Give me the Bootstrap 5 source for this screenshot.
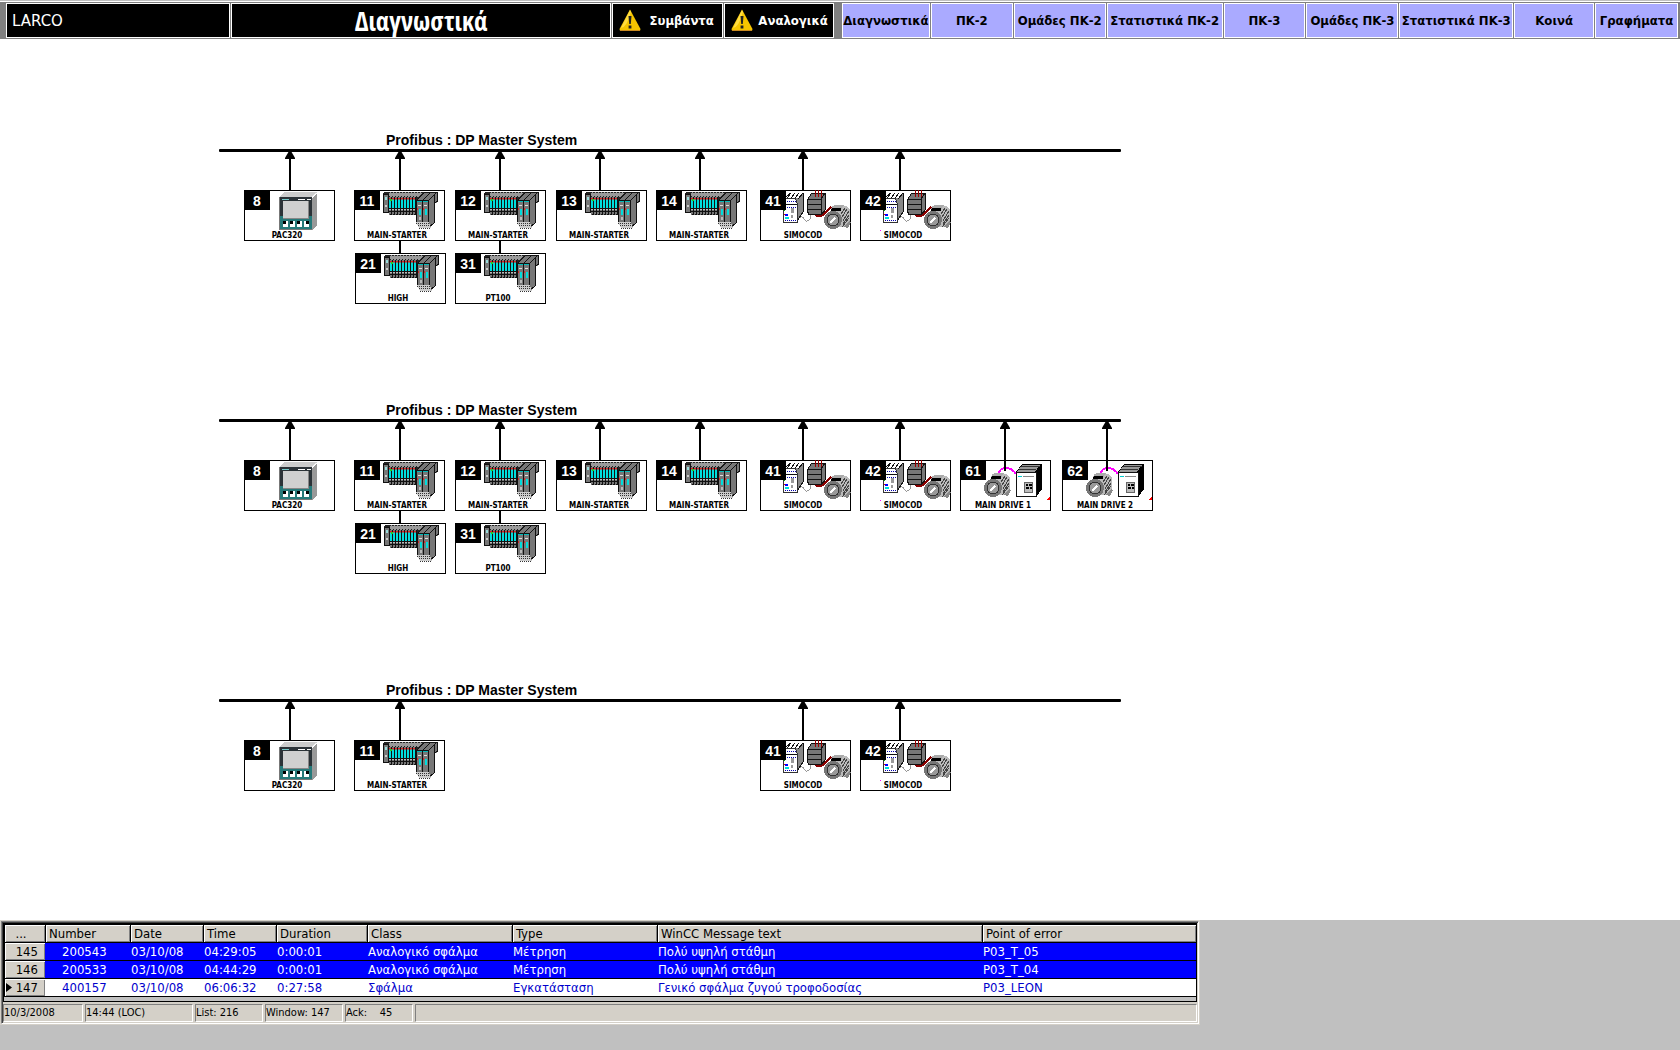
<!DOCTYPE html>
<html lang="el">
<head>
<meta charset="utf-8">
<meta name="viewport" content="width=device-width, initial-scale=1">
<title>LARCO - Διαγνωστικά</title>
<link href="https://cdn.jsdelivr.net/npm/bootstrap@5.3.0/dist/css/bootstrap.min.css" rel="stylesheet">
<style>
  body { background: #c0c0c0; color: #000; font-family: "DejaVu Sans", sans-serif; }

  /* top bar */
  .topbar { background: #808080; border-top: 1px solid #c0c0c0; box-shadow: inset 0 1px #fff; padding: 2px 2px 1px 6px; column-gap: 1px;
    grid-template-columns: 224fr 381fr 111fr 117fr 88fr 82fr 92fr 116fr 82fr 92fr 114fr 80fr 83fr; }
  .cellbox { height: 35px; border: 1px solid #fff; background: #000; color: #fff; padding: 0; min-width: 0; white-space: nowrap; }
  .plant { font-size: 15px; padding: 2px 0 0 5px; }
  .heading { font: 700 26px/34px "Liberation Sans Narrow", "Open Sans Condensed", "DejaVu Sans Condensed", sans-serif; }
  .alertbtn { font: 700 13px/33px "DejaVu Sans Condensed", sans-serif; }
  .alertbtn svg { width: 22px; height: 23px; margin-left: 6px; }
  .alertbtn.gapped { margin-right: 7px; }
  .menubtn { background: #aaf; color: #000; font: 700 13px/33px "DejaVu Sans Condensed", sans-serif; }
  .menubtn:hover { background: #bbf; }

  /* network diagram */
  .plan { background: #fff; padding: 92px 0 65px; overflow-x: auto; }
  .segment { position: relative; min-height: 174px; min-width: 1200px; }
  .seg2 { margin-top: 96px; }
  .seg3 { margin-top: 106px; }
  .segment h2 { font: 700 14px/18px "Liberation Sans", sans-serif; margin: 0 0 0 386px; }
  .busline { width: 902px; height: 3px; background: #000; margin-left: 219px; border-radius: 1px; }
  .wires { position: absolute; left: 0; top: 0; width: 1200px; height: 174px; pointer-events: none; }
  .station { position: absolute; top: 59px; width: 91px; height: 51px; border: 1px solid #000; background: #fff; padding: 0; }
  .station.low { top: 122px; }
  .station svg { position: absolute; left: -1px; top: -1px; width: 91px; height: 51px; shape-rendering: crispEdges; }
  .station b { position: absolute; left: 0; top: 0; width: 24px; height: 19px; background: #000; color: #fff; font: 700 14px/20px "Liberation Sans", sans-serif; text-align: center; box-shadow: 1px 0 #000; }
  .station span { position: absolute; left: 0; right: 5px; bottom: -1px; font: 700 8px/10px "DejaVu Sans Condensed", sans-serif; text-align: center; white-space: nowrap; }
  .c8 { left: 244px; } .c11 { left: 354px; } .c21 { left: 355px; } .c12 { left: 455px; }
  .c13 { left: 556px; } .c14 { left: 656px; } .c41 { left: 760px; } .c42 { left: 860px; }
  .c61 { left: 960px; } .c62 { left: 1062px; }

  /* alarm list */
  .alarms { width: 100%; max-width: 1200px; background: #d4d0c8; border: 1px solid #d4d0c8; font-family: "DejaVu Sans Condensed", sans-serif; }
  .sunk { border: 1px solid; border-color: #808080 #fff #fff #808080; }
  .sunk > div { border: solid #404040; border-width: 1px 0 0 1px; padding: 0 1px 1px 0; }
  .listframe { border: solid #000; border-width: 1px 1px 0; }
  .msgs { table-layout: fixed; width: 100%; border-collapse: separate; border-spacing: 0; font-size: 13px; line-height: 17px; }
  .msgs th, .msgs td { height: 18px; padding: 0 0 0 1px; border-bottom: 1px solid #000; white-space: nowrap; overflow: hidden; font-weight: 400; }
  .msgs thead th { height: 19px; background: #d4d0c8; border-top: 1px solid #000; border-left: 1px solid #000; box-shadow: inset 1px 1px #fff, inset -1px -1px #808080; padding: 1px 0 0 3px; line-height: 16px; }
  .msgs tbody th { background: #d4d0c8; border-left: 1px solid #000; box-shadow: inset 1px 1px #fff, inset -1px -1px #808080; padding-right: 7px; text-align: right; }
  .msgs .hot td { background: #00f; color: #fff; }
  .msgs .now td { background: #fff; color: #00c; }
  .msgs tbody td:nth-child(2) { padding-left: 17px; }
  .msgs tbody th svg { width: 6px; height: 9px; float: left; margin: 4px 0 0; }
  .listend { height: 5px; background: #c0c0c0; border-bottom: 1px solid #000; }
  .status { font-size: 11px; line-height: 16px; gap: 2px; padding: 2px 0 0; }
  .status li { height: 18px; border: 1px solid; border-color: #808080 #fff #fff #808080; white-space: pre; }
  .w80 { width: 80px; } .w108 { width: 108px; } .w68 { width: 68px; } .w78 { width: 78px; }
</style>
</head>
<body>
<svg class="d-none" xmlns="http://www.w3.org/2000/svg">
  <defs>
    <symbol id="warn" viewBox="0 0 22 23">
      <path d="M11 0.5 L21.5 20 Q21.5 22 20 22 H2 Q0.5 22 0.5 20 Z" fill="#f5c400"/>
      <path d="M11 1 L2 19 Q8 18 12 3Z" fill="#ffdc40"/>
      <path d="M1 21.5H21" stroke="#c98a20"/>
      <path d="M9.5 7h3l-.7 8h-1.6z" fill="#222"/><rect x="9.6" y="16.500" width="2.800" height="3" fill="#222"/>
    </symbol>
    <symbol id="arrow" viewBox="0 0 12 60" overflow="visible">
      <path d="M5 2h2l4 7v1H1v-1z"/><rect x="5" y="8" width="2" height="33"/>
    </symbol>
    <symbol id="pac" viewBox="0 0 91 51">
      <path d="M35 7l5-5h33l-5 5z" fill="#ccc"/><path d="M68 8l5-5v32l-5 5z" fill="#999"/><path d="M68 7l4-4" stroke="#eee"/>
      <rect x="35" y="7" width="33" height="32" fill="#2c3338"/><path d="M35 26h33v13H35z" fill="#267a7a"/>
      <path d="M35.500 7v32h32" stroke="#777" fill="none"/>
      <rect x="39" y="11" width="26" height="18" fill="#d0d0d0"/><path d="M39 28.500h26M64.500 11v18" stroke="#888"/>
      <path d="M38 9.500h7" stroke="#7cc"/><path d="M54 9.500h7M63 9.500h4" stroke="#fff"/>
      <path d="M39 31h5v6h-5zM46 31h5v6h-5zM53 31h5v6h-5zM60 31h5v6h-5z" fill="#fff"/>
      <path d="M39 31h3v3h-3zM46 31h3v3h-3zM53 31h3v3h-3zM62 31h3v3h-3z"/>
    </symbol>
    <symbol id="mod" viewBox="0 0 3 18" overflow="visible">
      <rect width="3" height="18" fill="#777"/><rect y="3" width="2" height="8" fill="#0dd"/><path d="M2 0h1v18H2z" fill="#111"/>
      <rect width="2" height="1" y="1" fill="#d22"/><path d="M0 11h3v1H0zM0 14h3v1H0zM1 17h2v1H1z" fill="#111"/><path d="M0 12h2v1H0z" fill="#bbb"/>
    </symbol>
    <symbol id="et" viewBox="0 0 91 51">
      <path d="M30 2h53v5l-12 4H29V4z" fill="#222"/>
      <path d="M33 7l4-4M36 7l4-4M39 7l4-4M42 7l4-4M45 7l4-4M48 7l4-4M51 7l4-4M54 7l4-4M57 7l4-4M60 7l4-4M63 7l4-4" stroke="#999" stroke-width="1.500"/>
      <path d="M29 4h5l1 18h-6z" fill="#777" stroke="#111"/><path d="M31 7h2v3h-2z" fill="#9dd"/><path d="M31 15h2v2h-2z" fill="#ccc"/>
      <use href="#mod" x="35" y="7" width="3" height="18"/><use href="#mod" x="38" y="7" width="3" height="18"/><use href="#mod" x="41" y="7" width="3" height="18"/><use href="#mod" x="44" y="7" width="3" height="18"/><use href="#mod" x="47" y="7" width="3" height="18"/><use href="#mod" x="50" y="7" width="3" height="18"/><use href="#mod" x="53" y="7" width="3" height="18"/><use href="#mod" x="56" y="7" width="3" height="18"/><use href="#mod" x="59" y="7" width="3" height="18"/>
      <path d="M36 9h2v2h-2z" fill="#2c2"/>
      <path d="M62 11l9-9h13v10l-3 1v20l-6 5h-2V11z" fill="#777"/>
      <path d="M62.500 10.500l8-8h13v9l-3 1v20l-6 5" fill="none" stroke="#111"/>
      <path d="M68 11l8-8M74 11l8-8" stroke="#111"/><path d="M80 4v8" stroke="#111"/>
      <path d="M62.500 10.500h6v22h-6zM68.500 10.500h6v22h-6z" fill="#777" stroke="#111"/>
      <path d="M63 11h5v1h-5zM69 11h5v1h-5z" fill="#0bb"/><path d="M64 15h3v1h-3zM70 15h3v1h-3z" fill="#ddd"/>
      <path d="M65 19h2v6h-2zM71 19h2v6h-2z" fill="#0dd"/><path d="M63 18h1v2h-1zM69 18h1v2h-1z" fill="#d22"/><path d="M65 27h2v3h-2z" fill="#bbb"/>
      <path d="M62 32h13l2 6H65z" fill="#ccc"/><path d="M62 33.500h13M64 35.500h12M65 38.500h12" stroke="#333" stroke-dasharray="1 1"/>
    </symbol>
    <symbol id="motor" viewBox="0 0 32 26" overflow="visible">
      <path d="M9 4l4-3h9l4 4v12l-5 5H10z" fill="#bbb"/>
      <path d="M17 9l4-6M18 12l5-8M19 16l6-10M19 19l6-9M18 22l7-9" stroke="#444"/>
      <path d="M20 22l5-6 2 1-3 6z" fill="#888"/>
      <path d="M8 1l3-1h9l-3 5H7z" fill="#aaa"/><path d="M8 3h9v3H7z"/>
      <circle cx="9" cy="15" r="9" fill="#777"/><circle cx="9" cy="15" r="6" fill="#999" stroke="#333"/>
      <path d="M6 18l5-5" stroke="#fff" stroke-width="2"/>
    </symbol>
    <symbol id="simo" viewBox="0 0 91 51">
      <path d="M24 9l6-6h13v19l-6 9z" fill="#888" stroke="#111"/>
      <path d="M25 8l5-5h13l-4 5z" fill="#fff"/><path d="M27 8l4-5M31 8l4-5M35 8l4-5M38 9l5-6" stroke="#111"/>
      <path d="M23.500 8.500h12l2 6v18h-14z" fill="#fff" stroke="#333"/>
      <path d="M25 11.500h11M25 17.500h12M25 30.500h11" stroke="#00a" stroke-dasharray="1 1"/><path d="M24 14.500h13" stroke="#111"/>
      <path d="M25 24h3v2h-3z" fill="#00f"/><path d="M25 27h4v2h-4z" fill="#0dd"/><path d="M31 18h3v5h-3zM31 25h2v3h-2z" fill="#999"/><path d="M24 20h1v1h-1z" fill="#0b0"/><path d="M24 24h1v1h-1z" fill="red"/>
      <path d="M40 28q2-3 4 1t6 0v-4" fill="none" stroke="#999"/>
      <path d="M55 25q5 3 9-1t7-7" fill="none" stroke="#800" stroke-width="2"/>
      <path d="M47.500 9.500l4-6h14v16l-4 5h-13l-1-4z" fill="#777" stroke="#111"/>
      <path d="M47 9h14l4-6M61 9v15M48 14.500h13M47 19.500h14" stroke="#111" fill="none"/>
      <path d="M55.500 0v7M58.500 0v7M61.500 0v7" stroke="#900"/>
      <use href="#motor" x="64" y="15" width="32" height="26"/>
    </symbol>
    <symbol id="drive" viewBox="0 0 91 51">
      <use href="#motor" x="24" y="13" width="32" height="26"/>
      <path d="M39 13q1-5 7-5t10 6" fill="none" stroke="#f0f" stroke-width="2"/>
      <path d="M56 12l6-8h20v25l-6 8z"/>
      <path d="M57 12l5-7h18l-5 7z" fill="#999"/><path d="M61 6.500h19M59 9.500h17" stroke="#333"/>
      <path d="M56.500 12.500h20v24h-20z" fill="#fff" stroke="#111"/>
      <path d="M58 16.500h4" stroke="#0cc"/><path d="M63 16.500h11" stroke="#888"/>
      <path d="M64 22h9v11h-9z" fill="#bbb"/><path d="M66 24h2v2h-2zM69 24h3v2h-3zM66 27h3v2h-3zM70 27h2v2h-2z"/><path d="M64.500 22.500h8v10h-8z" fill="none" stroke="#666"/>
      <path d="M86 40l4-4v4z" fill="red"/>
    </symbol>
  </defs>
</svg>

<header class="topbar d-grid">
  <div class="cellbox plant d-flex align-items-center">LARCO</div>
  <h1 class="cellbox heading m-0 text-center">Διαγνωστικά</h1>
  <button type="button" class="cellbox alertbtn d-flex align-items-center"><svg><use href="#warn"/></svg><span class="flex-fill text-center">Συμβάντα</span></button>
  <button type="button" class="cellbox alertbtn gapped d-flex align-items-center"><svg><use href="#warn"/></svg><span class="flex-fill text-center">Αναλογικά</span></button>
  <button type="button" class="cellbox menubtn">Διαγνωστικά</button>
  <button type="button" class="cellbox menubtn">ΠΚ-2</button>
  <button type="button" class="cellbox menubtn">Ομάδες ΠΚ-2</button>
  <button type="button" class="cellbox menubtn">Στατιστικά ΠΚ-2</button>
  <button type="button" class="cellbox menubtn">ΠΚ-3</button>
  <button type="button" class="cellbox menubtn">Ομάδες ΠΚ-3</button>
  <button type="button" class="cellbox menubtn">Στατιστικά ΠΚ-3</button>
  <button type="button" class="cellbox menubtn">Κοινά</button>
  <button type="button" class="cellbox menubtn">Γραφήματα</button>
</header>

<main class="plan">
  <section class="segment">
    <h2>Profibus : DP Master System</h2>
    <div class="busline"></div>
    <div class="station c8"><svg><use href="#pac"/></svg><b>8</b><span>PAC320</span></div>
    <div class="station c11"><svg><use href="#et"/></svg><b>11</b><span>MAIN-STARTER</span></div>
    <div class="station c12"><svg><use href="#et"/></svg><b>12</b><span>MAIN-STARTER</span></div>
    <div class="station c13"><svg><use href="#et"/></svg><b>13</b><span>MAIN-STARTER</span></div>
    <div class="station c14"><svg><use href="#et"/></svg><b>14</b><span>MAIN-STARTER</span></div>
    <div class="station c41"><svg><use href="#simo"/></svg><b>41</b><span>SIMOCOD</span></div>
    <div class="station c42"><svg><use href="#simo"/><path d="M20 40h1v1h-1z" fill="#f0f"/></svg><b>42</b><span>SIMOCOD</span></div>
    <div class="station low c21"><svg><use href="#et"/></svg><b>21</b><span>HIGH</span></div>
    <div class="station low c12"><svg><use href="#et"/></svg><b>31</b><span>PT100</span></div>
    <svg class="wires">
      <use href="#arrow" x="284" y="18" width="12" height="60"/><use href="#arrow" x="394" y="18" width="12" height="60"/><use href="#arrow" x="494" y="18" width="12" height="60"/><use href="#arrow" x="594" y="18" width="12" height="60"/><use href="#arrow" x="694" y="18" width="12" height="60"/><use href="#arrow" x="797" y="18" width="12" height="60"/><use href="#arrow" x="894" y="18" width="12" height="60"/>
      <path d="M399 110h2v12h-2zM499 110h2v12h-2z"/>
    </svg>
  </section>

  <section class="segment seg2">
    <h2>Profibus : DP Master System</h2>
    <div class="busline"></div>
    <div class="station c8"><svg><use href="#pac"/></svg><b>8</b><span>PAC320</span></div>
    <div class="station c11"><svg><use href="#et"/></svg><b>11</b><span>MAIN-STARTER</span></div>
    <div class="station c12"><svg><use href="#et"/></svg><b>12</b><span>MAIN-STARTER</span></div>
    <div class="station c13"><svg><use href="#et"/></svg><b>13</b><span>MAIN-STARTER</span></div>
    <div class="station c14"><svg><use href="#et"/></svg><b>14</b><span>MAIN-STARTER</span></div>
    <div class="station c41"><svg><use href="#simo"/></svg><b>41</b><span>SIMOCOD</span></div>
    <div class="station c42"><svg><use href="#simo"/><path d="M20 40h1v1h-1z" fill="#f0f"/></svg><b>42</b><span>SIMOCOD</span></div>
    <div class="station c61"><svg><use href="#drive"/></svg><b>61</b><span>MAIN DRIVE 1</span></div>
    <div class="station c62"><svg><use href="#drive"/></svg><b>62</b><span>MAIN DRIVE 2</span></div>
    <div class="station low c21"><svg><use href="#et"/></svg><b>21</b><span>HIGH</span></div>
    <div class="station low c12"><svg><use href="#et"/></svg><b>31</b><span>PT100</span></div>
    <svg class="wires">
      <use href="#arrow" x="284" y="18" width="12" height="60"/><use href="#arrow" x="394" y="18" width="12" height="60"/><use href="#arrow" x="494" y="18" width="12" height="60"/><use href="#arrow" x="594" y="18" width="12" height="60"/><use href="#arrow" x="694" y="18" width="12" height="60"/><use href="#arrow" x="797" y="18" width="12" height="60"/><use href="#arrow" x="894" y="18" width="12" height="60"/><use href="#arrow" x="999" y="18" width="12" height="60"/><use href="#arrow" x="1101" y="18" width="12" height="60"/>
      <path d="M399 110h2v12h-2zM499 110h2v12h-2zM1004 58h2v12h-2zM1106 58h2v12h-2z"/>
    </svg>
  </section>

  <section class="segment seg3">
    <h2>Profibus : DP Master System</h2>
    <div class="busline"></div>
    <div class="station c8"><svg><use href="#pac"/></svg><b>8</b><span>PAC320</span></div>
    <div class="station c11"><svg><use href="#et"/></svg><b>11</b><span>MAIN-STARTER</span></div>
    <div class="station c41"><svg><use href="#simo"/></svg><b>41</b><span>SIMOCOD</span></div>
    <div class="station c42"><svg><use href="#simo"/><path d="M20 40h1v1h-1z" fill="#f0f"/></svg><b>42</b><span>SIMOCOD</span></div>
    <svg class="wires">
      <use href="#arrow" x="284" y="18" width="12" height="60"/><use href="#arrow" x="394" y="18" width="12" height="60"/><use href="#arrow" x="797" y="18" width="12" height="60"/><use href="#arrow" x="894" y="18" width="12" height="60"/>
    </svg>
  </section>
</main>

<footer class="alarms">
  <div class="sunk"><div>
    <div class="listframe">
      <table class="msgs">
        <colgroup><col style="width:41px"><col style="width:85px"><col style="width:73px"><col style="width:73px"><col style="width:91px"><col style="width:145px"><col style="width:145px"><col style="width:325px"><col></colgroup>
        <thead><tr><th>&nbsp; ...</th><th>Number</th><th>Date</th><th>Time</th><th>Duration</th><th>Class</th><th>Type</th><th>WinCC Message text</th><th>Point of error</th></tr></thead>
        <tbody>
          <tr class="hot"><th>145</th><td>200543</td><td>03/10/08</td><td>04:29:05</td><td>0:00:01</td><td>Αναλογικό σφάλμα</td><td>Μέτρηση</td><td>Πολύ υψηλή στάθμη</td><td>P03_T_05</td></tr>
          <tr class="hot"><th>146</th><td>200533</td><td>03/10/08</td><td>04:44:29</td><td>0:00:01</td><td>Αναλογικό σφάλμα</td><td>Μέτρηση</td><td>Πολύ υψηλή στάθμη</td><td>P03_T_04</td></tr>
          <tr class="now"><th><svg viewBox="0 0 6 9"><path d="M0 0l6 4.500L0 9z"/></svg>147</th><td>400157</td><td>03/10/08</td><td>06:06:32</td><td>0:27:58</td><td>Σφάλμα</td><td>Εγκατάσταση</td><td>Γενικό σφάλμα ζυγού τροφοδοσίας</td><td>P03_LEON</td></tr>
        </tbody>
      </table>
      <div class="listend"></div>
    </div>
    <ul class="status list-unstyled d-flex m-0">
      <li class="w80">10/3/2008</li><li class="w108">14:44 (LOC)</li><li class="w68">List: 216</li><li class="w78">Window: 147</li><li class="w68">Ack:    45</li><li class="flex-fill"></li>
    </ul>
  </div></div>
</footer>
<script src="https://cdn.jsdelivr.net/npm/bootstrap@5.3.0/dist/js/bootstrap.bundle.min.js"></script>
</body>
</html>
